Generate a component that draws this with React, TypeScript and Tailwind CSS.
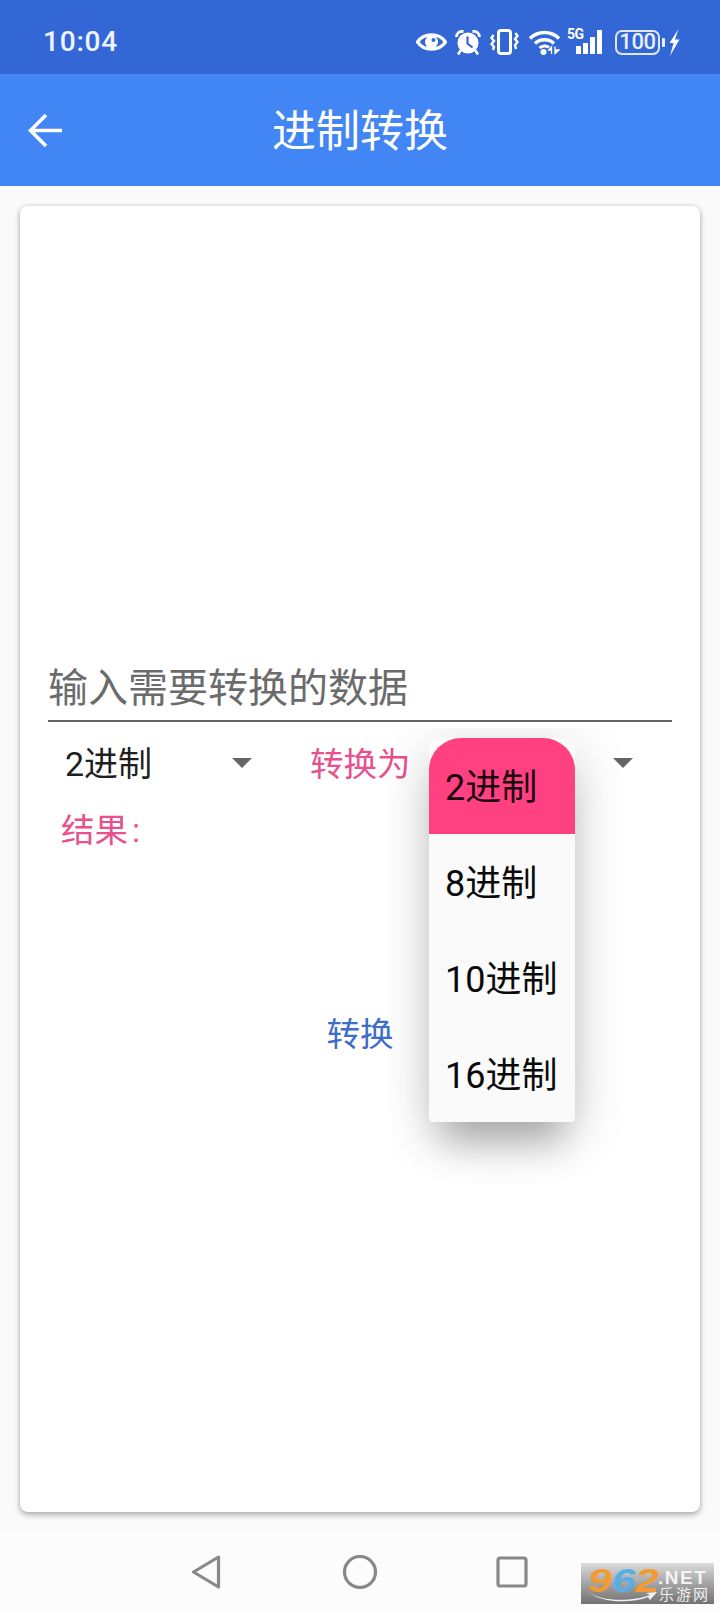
import React from "react";

const Eye = () => (
  <svg width="31" height="22" viewBox="0 0 31 22" fill="none">
    <path d="M1.500 11C8 1.500 23 1.500 29.500 11C23 20.500 8 20.500 1.500 11Z" stroke="#fff" strokeWidth="3.200" strokeLinejoin="round" />
    <circle cx="15.500" cy="11" r="6.500" fill="#fff" />
    <circle cx="17.500" cy="9" r="2" fill="#3367d6" />
  </svg>
);

const Alarm = () => (
  <svg width="26" height="25" viewBox="0 0 26 25" fill="none">
    <circle cx="13" cy="13" r="10.500" fill="#fff" />
    <path d="M12.500 6.500V13.500L17.500 17.500" stroke="#3367d6" strokeWidth="2.200" />
    <path d="M1.500 7C1.500 3 4.500 0.800 8.500 1.500" stroke="#fff" strokeWidth="2.800" />
    <path d="M24.500 7C24.500 3 21.500 0.800 17.500 1.500" stroke="#fff" strokeWidth="2.800" />
    <path d="M6 20L3 24.500M20 20L23 24.500" stroke="#fff" strokeWidth="2.600" />
  </svg>
);

const Vibrate = () => (
  <svg width="29" height="26" viewBox="0 0 29 26" fill="none">
    <rect x="8.500" y="1.500" width="12" height="23" rx="2.500" stroke="#fff" strokeWidth="3" />
    <path d="M3.500 6L1.500 9L4 12L1.500 15L4 18L3 21" stroke="#fff" strokeWidth="2.400" />
    <path d="M25.500 4L27.500 7L25 10L27.500 13L25 16L26 20" stroke="#fff" strokeWidth="2.400" />
  </svg>
);

const Wifi = () => (
  <svg width="31" height="25" viewBox="0 0 31 25" fill="none">
    <path d="M1 8.500C9 0.500 22 0.500 30 8.500" stroke="#fff" strokeWidth="3.400" />
    <path d="M6 13.500C11 8.500 20 8.500 25 13.500" stroke="#fff" strokeWidth="3.400" />
    <path d="M10.500 18C13 15.500 18 15.500 20 17.500" stroke="#fff" strokeWidth="3" />
    <circle cx="14.500" cy="22" r="3" fill="#fff" />
    <path d="M22.500 24V17L19.800 20H22.500M26 16.500V23.500L30 20H26" fill="#fff" stroke="#fff" strokeWidth="1.300" />
  </svg>
);

const Signal = () => (
  <div className="relative w-[38px] h-[26px]">
    <svg className="absolute left-0 top-0" width="38" height="26" viewBox="0 0 38 26" fill="#fff">
      <rect x="9" y="17" width="5" height="8" />
      <rect x="16" y="14" width="5" height="11" />
      <rect x="23" y="8" width="5" height="17" />
      <rect x="30" y="1" width="5" height="24" />
    </svg>
    <span className="absolute left-0 top-[-2px] text-[14px] leading-[15px] font-bold text-white font-['Roboto',sans-serif] tracking-[-0.5px]">5G</span>
  </div>
);

const Battery = () => (
  <div className="flex items-center w-[50px]">
    <div className="w-[45px] h-[25px] rounded-[7px] border-[2.500px] border-[#dfe8fb] flex items-center justify-center text-[22px] leading-none font-medium text-[#e8efff] font-['Roboto',sans-serif] tracking-[-0.3px]">
      100
    </div>
    <div className="ml-[2px] w-[3px] h-[9px] rounded-[1px] bg-[#e8efff]" />
  </div>
);

const Bolt = () => (
  <svg width="11" height="27" viewBox="0 0 11 27" fill="#fff">
    <path d="M9.500 0L0.500 14H4.500L1 27L10.500 10.500H6Z" />
  </svg>
);

const Caret = () => <div className="w-0 h-0 border-x-[10px] border-x-transparent border-t-[10px] border-t-[#666]" />;

const items = ["2进制", "8进制", "10进制", "16进制"];

export default function App() {
  return (
    <div className="w-[720px] h-[1610px] flex flex-col overflow-hidden bg-[#fafafa] font-['Roboto','Noto_Sans_CJK_SC',sans-serif]">
      <div className="h-[74px] shrink-0 bg-[#3367d6] flex items-center pl-[43px] pr-[40px] pt-[10px]">
        <span className="text-[28px] leading-none font-medium text-[#eef3ff] tracking-[0.8px]">10:04</span>
        <div className="ml-auto flex items-center">
          <Eye />
          <div className="ml-[8px]"><Alarm /></div>
          <div className="ml-[9px]"><Vibrate /></div>
          <div className="ml-[10px]"><Wifi /></div>
          <div className="ml-[7px]"><Signal /></div>
          <div className="ml-[10px]"><Battery /></div>
          <div className="ml-[4px]"><Bolt /></div>
        </div>
      </div>

      <div className="h-[112px] shrink-0 bg-[#4285f4] relative flex items-center justify-center">
        <svg className="absolute left-[26px] top-[37px]" width="38" height="38" viewBox="0 0 38 38" fill="none">
          <path d="M36 19.500H5M20 4L4.500 19.500L20 35" stroke="#fff" strokeWidth="3.600" />
        </svg>
        <span className="text-[44px] leading-none text-white mt-[4px]">进制转换</span>
      </div>

      <div className="h-[1306px] shrink-0 mx-[20px] mt-[20px] bg-white rounded-[8px] shadow-[0_3px_6px_rgba(0,0,0,0.28),0_0_4px_rgba(0,0,0,0.12)] relative flex flex-col">
        <div className="mt-[448px] mx-[28px] h-[68px] pt-[4px] border-b-2 border-[#666] flex items-center text-[40px] leading-none text-[#6b6b6b]">
          输入需要转换的数据
        </div>

        <div className="h-[82px] flex items-center">
          <span className="ml-[45px] mt-[2px] text-[34px] leading-none text-[#1f1f1f]">2进制</span>
          <div className="ml-[80px]"><Caret /></div>
          <span className="ml-[58px] mt-[4px] text-[33.500px] leading-none text-[#e8508e]">转换为</span>
          <div className="ml-[202px]"><Caret /></div>
        </div>

        <div className="h-[52px] flex items-center pl-[41px] pt-[2px] text-[33.500px] leading-none text-[#e8508e]">
          <span>结果</span>
          <span className="ml-[4px]">:</span>
        </div>

        <div className="mt-[162px] flex justify-center text-[33.500px] leading-none text-[#3d6cc9]">转换</div>

        <div className="absolute left-[370px] top-[522px] w-[243px] h-[458px] overflow-hidden">
          <div className="absolute left-[39px] top-[10px] w-[146px] rounded-[4px] bg-[#fafafa] shadow-[0_32px_36px_-12px_rgba(0,0,0,0.26),0_10px_56px_rgba(0,0,0,0.17)]">
            {items.map((t, i) => (
              <div
                key={t}
                className={
                  i === 0
                    ? "h-[96px] flex items-center pl-[16px] pt-[4px] text-[36px] leading-none text-[#1a0510] bg-[#ff4081] rounded-t-[32px]"
                    : "h-[96px] flex items-center pl-[16px] pt-[4px] text-[36px] leading-none text-[#0a0a0a]"
                }
              >
                {t}
              </div>
            ))}
          </div>
        </div>
      </div>

      <div className="mt-[20px] flex-1 bg-[#fcfcfc] relative">
        <div className="pt-[22px] flex items-center">
          <svg className="ml-[191px]" width="31" height="34" viewBox="0 0 31 34" fill="none">
            <path d="M27.500 2L2.500 17L27.500 32Z" stroke="#888" strokeWidth="3.200" strokeLinejoin="round" />
          </svg>
          <svg className="ml-[120px]" width="36" height="36" viewBox="0 0 36 36" fill="none">
            <circle cx="18" cy="18" r="15.500" stroke="#888" strokeWidth="3.200" />
          </svg>
          <svg className="ml-[118px]" width="32" height="32" viewBox="0 0 32 32" fill="none">
            <rect x="2" y="2" width="28" height="28" rx="2" stroke="#888" strokeWidth="3.200" />
          </svg>
        </div>

        <div className="absolute left-[581px] top-[31px] w-[133px] h-[41px] bg-gradient-to-b from-[#dcdcdc] via-[#a4a4a4] to-[#727272]">
          <span className="absolute left-[7px] top-[2px] inline-block origin-left scale-x-[1.25] text-[34px] leading-[30px] font-bold italic font-['Liberation_Sans',sans-serif]">
            <span className="text-[#f59a2e]">9</span>
            <span className="text-[#5aaee6]">6</span>
            <span className="text-[#f59a2e]">2</span>
          </span>
          <span className="absolute left-[77px] top-[5px] text-[19px] leading-[19px] font-bold tracking-[1.500px] text-[#f4f4f4] font-['Liberation_Sans',sans-serif]">.NET</span>
          <span className="absolute left-[78px] top-[24px] text-[15px] leading-[16px] tracking-[2px] text-[#f0f0f0]">乐游网</span>
          <svg className="absolute left-[5px] top-[26px]" width="72" height="15" viewBox="0 0 72 15" fill="none">
            <path d="M1 2C14 13 46 13 64 6L60 4L71 3L64 11L62 8C44 15 14 14 1 2Z" fill="#f2f2f2" />
          </svg>
        </div>
      </div>
    </div>
  );
}
